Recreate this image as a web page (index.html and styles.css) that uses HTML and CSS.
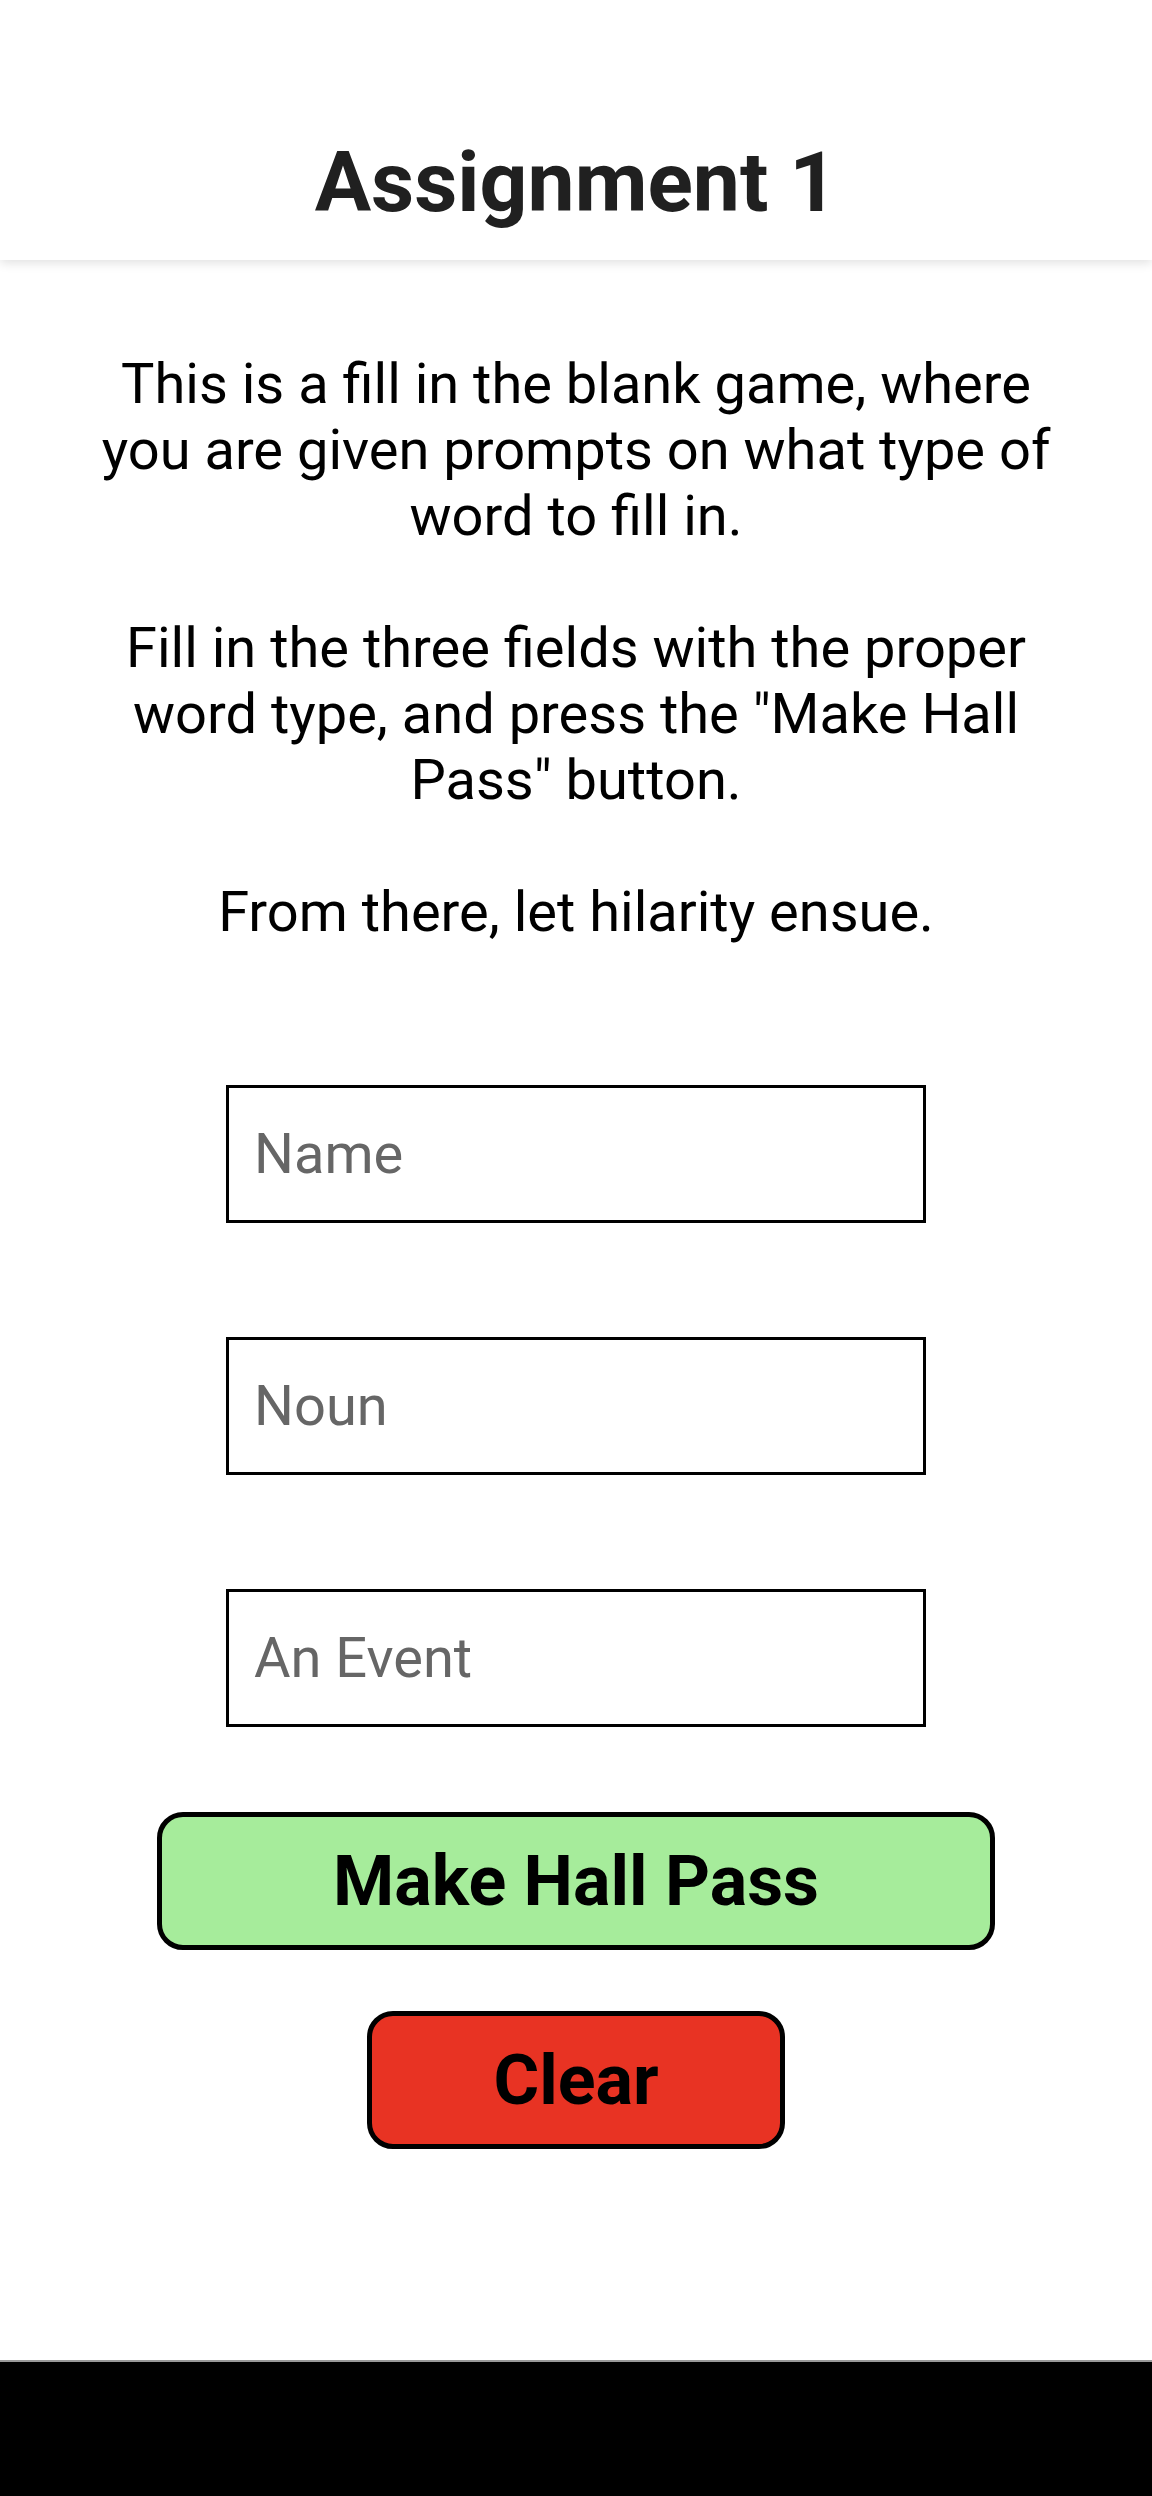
FILE: index.html
```html
<!DOCTYPE html>
<html lang="en">
<head>
<meta charset="utf-8">
<title>Assignment 1</title>
<link rel="stylesheet" href="styles.css">
</head>
<body>
<div class="screen">
  <header class="appbar">
    <h1 class="title">Assignment 1</h1>
  </header>
  <main class="content">
    <p class="intro">This is a fill in the blank game, where you are given prompts on what type of word to fill in.<br><br>Fill in the three fields with the proper word type, and press the "Make Hall Pass" button.<br><br>From there, let hilarity ensue.</p>
    <form class="fields">
      <input class="field" type="text" placeholder="Name">
      <input class="field" type="text" placeholder="Noun">
      <input class="field" type="text" placeholder="An Event">
    </form>
    <button class="btn btn-make" type="button">Make Hall Pass</button>
    <button class="btn btn-clear" type="button">Clear</button>
  </main>
  <div class="navbar"></div>
</div>
</body>
</html>
```
FILE: styles.css
```css
* { box-sizing: border-box; }
html, body {
  margin: 0;
  padding: 0;
  background: #ffffff;
}
body {
  font-family: Roboto, "Liberation Sans", sans-serif;
  color: #000;
}
.screen {
  width: 1152px;
  height: 2496px;
  display: flex;
  flex-direction: column;
  overflow: hidden;
}
.appbar {
  height: 260px;
  flex: none;
  background: #fff;
  display: flex;
  align-items: flex-end;
  justify-content: center;
  box-shadow: 0 3px 10px rgba(0,0,0,0.12);
  position: relative;
  z-index: 1;
}
.title {
  margin: 0 0 35px 0;
  font-size: 84px;
  font-weight: 700;
  color: #202020;
  line-height: 1;
}
.content {
  flex: 1;
  display: flex;
  flex-direction: column;
  align-items: center;
  border-bottom: 2px solid #9a9a9a;
}
.intro {
  margin: 91px 0 0 0;
  width: 960px;
  text-align: center;
  font-size: 56px;
  line-height: 66px;
}
.fields {
  margin-top: 140px;
  display: flex;
  flex-direction: column;
  gap: 114px;
}
.field {
  width: 700px;
  height: 138px;
  border: 3px solid #000;
  border-radius: 0;
  padding: 0 25px;
  font-family: Roboto, "Liberation Sans", sans-serif;
  font-size: 56px;
  color: #000;
  background: #fff;
  outline: none;
}
.field::placeholder {
  color: #666666;
}
.btn {
  height: 138px;
  border: 5px solid #000;
  border-radius: 26px;
  font-family: Roboto, "Liberation Sans", sans-serif;
  font-size: 70px;
  font-weight: 700;
  color: #000;
  padding: 0;
}
.btn-make {
  margin-top: 85px;
  width: 838px;
  background: #a6ec9b;
}
.btn-clear {
  margin-top: 61px;
  width: 418px;
  background: #e83323;
}
.navbar {
  height: 134px;
  flex: none;
  background: #000;
}
```
